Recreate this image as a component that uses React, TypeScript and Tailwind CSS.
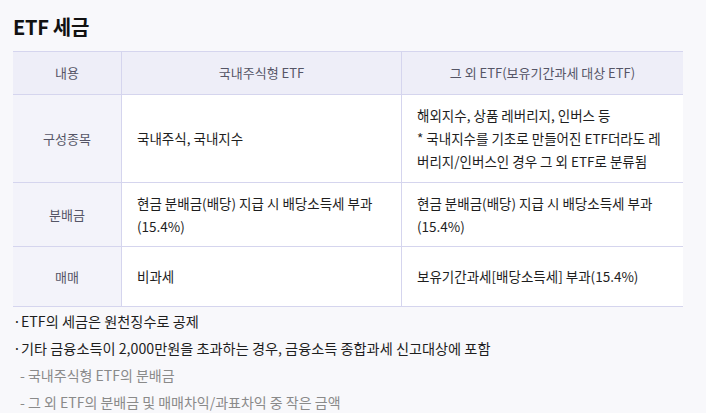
const rows = [
  {
    label: '구성종목',
    domestic: ['국내주식, 국내지수'],
    other: [
      '해외지수, 상품 레버리지, 인버스 등',
      '* 국내지수를 기초로 만들어진 ETF더라도 레',
      '버리지/인버스인 경우 그 외 ETF로 분류됨',
    ],
    h: 'h-[88px]',
  },
  {
    label: '분배금',
    domestic: ['현금 분배금(배당) 지급 시 배당소득세 부과', '(15.4%)'],
    other: ['현금 분배금(배당) 지급 시 배당소득세 부과', '(15.4%)'],
    h: 'h-[64px]',
  },
  {
    label: '매매',
    domestic: ['비과세'],
    other: ['보유기간과세[배당소득세] 부과(15.4%)'],
    h: 'h-[60px]',
  },
]

export default function App() {
  return (
    <div
      className="w-[706px] h-[413px] bg-[#f8f8fb] pl-[13px] pt-[12px] overflow-hidden text-[#1e1e1e]"
      style={{ fontFamily: '"Noto Sans CJK KR", "Noto Sans", sans-serif' }}
    >
      <h1 className="text-[20px] font-bold leading-[30px] tracking-[-0.3px] text-[#111]">ETF 세금</h1>

      {/* Table */}
      <div className="mt-[9px] w-[670px] border-t border-[#d5d5ee]">
        <div className="grid grid-cols-[109px_280px_281px] h-[43px] bg-[#eeeef8] border-b border-[#d5d5ee] text-[13px] text-[#555566]">
          <div className="flex items-center justify-center border-r border-[#d5d5ee]">내용</div>
          <div className="flex items-center justify-center border-r border-[#d5d5ee]">국내주식형 ETF</div>
          <div className="flex items-center justify-center">그 외 ETF(보유기간과세 대상 ETF)</div>
        </div>
        {rows.map((r) => (
          <div
            key={r.label}
            className={`grid grid-cols-[109px_280px_281px] border-b border-[#d5d5ee] text-[13.5px] leading-[23px] ${r.h}`}
          >
            <div className="flex items-center justify-center bg-[#f3f3fa] border-r border-[#d5d5ee] text-[13px] text-[#555566]">
              {r.label}
            </div>
            <div className="flex flex-col justify-center bg-white px-[15px] border-r border-[#d5d5ee]">
              {r.domestic.map((t) => (
                <div key={t} className="whitespace-nowrap">{t}</div>
              ))}
            </div>
            <div className="flex flex-col justify-center bg-white px-[15px]">
              {r.other.map((t) => (
                <div key={t} className="whitespace-nowrap">{t}</div>
              ))}
            </div>
          </div>
        ))}
      </div>

      {/* Notes */}
      <div className="mt-[1px] text-[14.2px] leading-[27px]">
        <div className="flex">
          <span className="w-[8px]">·</span>
          <span>ETF의 세금은 원천징수로 공제</span>
        </div>
        <div className="flex">
          <span className="w-[8px]">·</span>
          <span>기타 금융소득이 2,000만원을 초과하는 경우, 금융소득 종합과세 신고대상에 포함</span>
        </div>
        <div className="pl-[7px] text-[14px] text-[#8a8a8a]">- 국내주식형 ETF의 분배금</div>
        <div className="pl-[7px] text-[14px] text-[#8a8a8a]">- 그 외 ETF의 분배금 및 매매차익/과표차익 중 작은 금액</div>
      </div>
    </div>
  )
}
